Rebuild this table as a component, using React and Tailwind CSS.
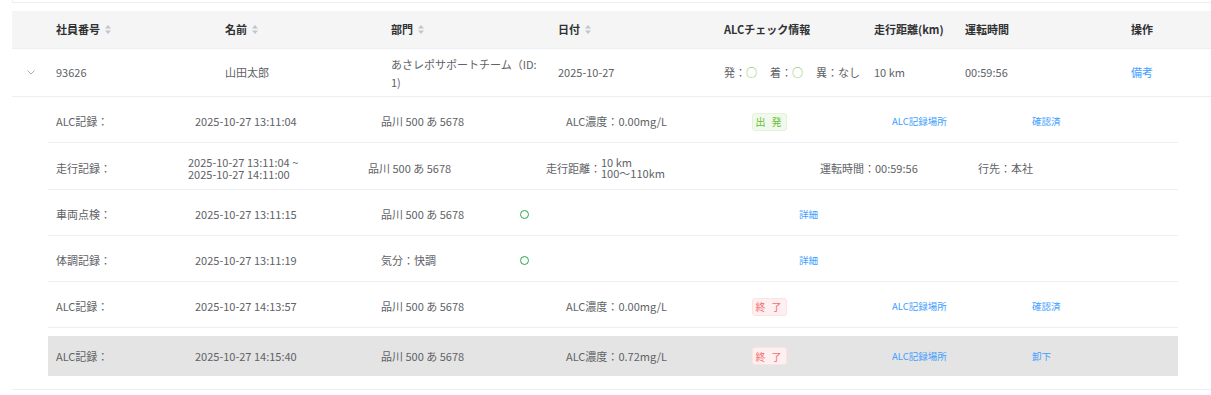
import React from "react";

const F = { fontFamily: '"Noto Sans CJK JP", "Noto Sans", sans-serif' };

function Sort() {
  return (
    <svg width="6" height="9" viewBox="0 0 6 9" className="ml-[5px] inline-block">
      <path d="M3 0 L6 3.4 L0 3.4 Z" fill="#c0c4cc" />
      <path d="M0 5.6 L6 5.6 L3 9 Z" fill="#c0c4cc" />
    </svg>
  );
}

function Circle() {
  return <span className="inline-block w-[9px] h-[9px] rounded-full border-[1.5px] border-[#2aa845]" />;
}

function Badge({ type }) {
  const cls =
    type === "start"
      ? "bg-[#f0f9eb] border-[#e1f3d8] text-[#67c23a]"
      : "bg-[#fef0f0] border-[#fde2e2] text-[#f56c6c]";
  return (
    <span className={`inline-flex items-center justify-center w-[35px] h-[18px] rounded-[3px] border text-[10px] tracking-[2px] ${cls}`}>
      {type === "start" ? "出 発" : "終 了"}
    </span>
  );
}

const link = "text-[#409eff] text-[9.5px]";

function AlcRow({ time, conc, badge, last, gray }) {
  return (
    <div
      className={`grid grid-cols-[139px_186px_185px_186px_140px_140px_1fr] items-center pl-[8px] ${
        gray ? "h-[40px] mt-[8px] bg-[#e4e4e4]" : "h-[46px] pt-[4px] border-b border-[#ebeef5]"
      }`}
    >
      <span>ALC記録：</span>
      <span>{time}</span>
      <span>品川 500 あ 5678</span>
      <span>ALC濃度：{conc}</span>
      <span><Badge type={badge} /></span>
      <span className={link}>ALC記録場所</span>
      <span className={link}>{last}</span>
    </div>
  );
}

function CheckRow({ label, time, mid }) {
  return (
    <div className="grid grid-cols-[139px_186px_139px_279px_1fr] items-center pl-[8px] h-[46px] pt-[4px] border-b border-[#ebeef5]">
      <span>{label}</span>
      <span>{time}</span>
      <span>{mid}</span>
      <span className="flex items-center"><Circle /></span>
      <span className={link}>詳細</span>
    </div>
  );
}

export default function App() {
  const head = "flex items-center pl-[8px]";
  return (
    <div className="w-[1211px] h-[395px] bg-white overflow-hidden text-[11px] text-[#606266]" style={F}>
      <div className="ml-[12px] h-[3px] border-l border-b border-[#ebeef5]" />
      <div className="ml-[12px] mt-[8px]">
        {/* header */}
        <div className="grid grid-cols-[36px_169px_166px_167px_166px_150px_91px_166px_1fr] h-[38px] bg-[#f5f5f6] border-b border-[#ebeef5] font-bold text-[#303133]">
          <div />
          <div className={head}>社員番号<Sort /></div>
          <div className={head}>名前<Sort /></div>
          <div className={head}>部門<Sort /></div>
          <div className={head}>日付<Sort /></div>
          <div className={head}>ALCチェック情報</div>
          <div className={head}>走行距離(km)</div>
          <div className={head}>運転時間</div>
          <div className={head}>操作</div>
        </div>
        {/* main row */}
        <div className="grid grid-cols-[36px_169px_166px_167px_166px_150px_91px_166px_1fr] h-[48px] border-b border-[#ebeef5]">
          <div className="flex items-center justify-center pl-[2px]">
            <svg width="8" height="5" viewBox="0 0 8 5">
              <polyline points="0.5,0.5 4,4 7.5,0.5" fill="none" stroke="#a8abb2" strokeWidth="1" />
            </svg>
          </div>
          <div className={head}>93626</div>
          <div className={head}>山田太郎</div>
          <div className={`${head} pr-[8px] leading-[18px]`}>あさレポサポートチーム（ID: 1)</div>
          <div className={head}>2025-10-27</div>
          <div className={`${head} gap-[13px]`}>
            <span>発：<span className="text-[#67c23a]">○</span></span>
            <span>着：<span className="text-[#67c23a]">○</span></span>
            <span>異：なし</span>
          </div>
          <div className={head}>10 km</div>
          <div className={head}>00:59:56</div>
          <div className={`${head} text-[#409eff]`}>備考</div>
        </div>
        {/* expanded */}
        <div className="pl-[36px] pr-[21px] pb-[13px] border-b border-[#ebeef5]">
          <div className="w-[1130px]">
            <AlcRow time="2025-10-27 13:11:04" conc="0.00mg/L" badge="start" last="確認済" />
            <div className="grid grid-cols-[132px_180px_178px_274px_158px_1fr] items-center pl-[8px] h-[47px] pt-[4px] border-b border-[#ebeef5]">
              <span>走行記録：</span>
              <span className="leading-[12px]">
                2025-10-27 13:11:04 ~<br />2025-10-27 14:11:00
              </span>
              <span>品川 500 あ 5678</span>
              <span className="flex items-center">
                <span>走行距離：</span>
                <span className="leading-[11px]">10 km<br />100〜110km</span>
              </span>
              <span>運転時間：00:59:56</span>
              <span>行先：本社</span>
            </div>
            <CheckRow label="車両点検：" time="2025-10-27 13:11:15" mid="品川 500 あ 5678" />
            <CheckRow label="体調記録：" time="2025-10-27 13:11:19" mid="気分：快調" />
            <AlcRow time="2025-10-27 14:13:57" conc="0.00mg/L" badge="end" last="確認済" />
            <AlcRow time="2025-10-27 14:15:40" conc="0.72mg/L" badge="end" last="卸下" gray />
          </div>
        </div>
      </div>
    </div>
  );
}
